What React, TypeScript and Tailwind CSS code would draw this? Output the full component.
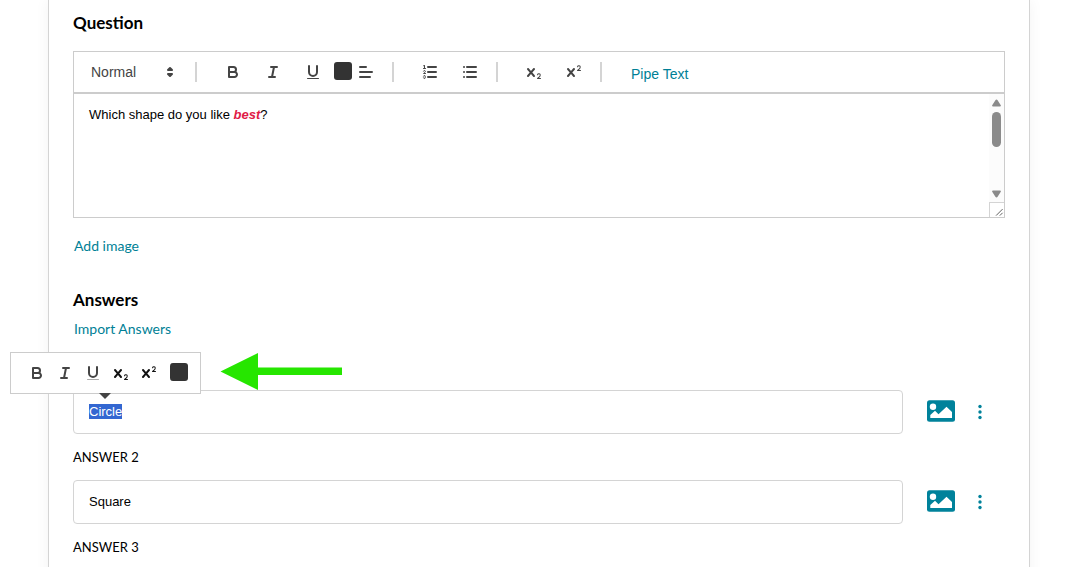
import { useEffect, useRef, type ReactNode } from "react";

function Icon({ children, className = "text-[#444]" }: { children: ReactNode; className?: string }) {
  return (
    <svg
      viewBox="0 0 18 18"
      aria-hidden="true"
      className={`size-[18px] shrink-0 ${className}`}
      fill="none"
      stroke="currentColor"
      strokeWidth="2"
      strokeLinecap="round"
      strokeLinejoin="round"
    >
      {children}
    </svg>
  );
}

const bold = (
  <>
    <path d="M5,4H9.5A2.5,2.5,0,0,1,12,6.5v0A2.5,2.5,0,0,1,9.5,9H5V4Z" />
    <path d="M5,9h5.5A2.5,2.5,0,0,1,13,11.5v0A2.5,2.5,0,0,1,10.5,14H5V9Z" />
  </>
);
const italic = <path d="M7,4H13M5,14H11M8,14L10,4" />;
const underline = (
  <>
    <path d="M5,3V9a4.012,4.012,0,0,0,4,4H9a4.012,4.012,0,0,0,4-4V3" />
    <rect x="3" y="15" width="12" height="1" rx="0.5" fill="currentColor" stroke="none" />
  </>
);
const underlineLight = (
  <>
    <path d="M5,3V9a4.012,4.012,0,0,0,4,4H9a4.012,4.012,0,0,0,4-4V3" />
    <rect x="3" y="15" width="12" height="1" rx="0.5" fill="#aaa" stroke="none" />
  </>
);
const align = <path d="M3,9H15M3,14H13M3,4H9" />;
const ordered = (
  <>
    <path d="M7,4H15M7,9H15M7,14H15" />
    <path strokeWidth="1" d="M2.5,5.5H4.5" />
    <path
      fill="currentColor"
      stroke="none"
      d="M3.5,6A0.5,0.5,0,0,1,3,5.5V3.085l-0.276.138A0.5,0.5,0,0,1,2.053,3c-0.124-.247-0.023-0.324.224-0.447l1-.5A0.5,0.5,0,0,1,4,2.5v3A0.5,0.5,0,0,1,3.5,6Z"
    />
    <path strokeWidth="1" d="M4.5,10.5h-2c0-.234,1.85-1.076,1.85-2.234A0.959,0.959,0,0,0,2.5,8.156" />
    <path
      strokeWidth="1"
      d="M2.5,14.846a0.959,0.959,0,0,0,1.85-.109A0.7,0.7,0,0,0,3.75,14a0.688,0.688,0,0,0,.6-0.736,0.959,0.959,0,0,0-1.85-.109"
    />
  </>
);
const bullet = <path d="M6,4H15M6,9H15M6,14H15M3,4h0.01M3,9h0.01M3,14h0.01" />;
const cross =
  "M9.65,5.241a1,1,0,0,0-1.409.108L6,7.964,3.759,5.349A1,1,0,0,0,2.192,6.59178Q2.21541,6.6213,2.241,6.649L4.684,9.5,2.241,12.35A1,1,0,0,0,3.71,13.70722q0.02557-.02768.049-0.05722L6,11.036,8.241,13.65a1,1,0,1,0,1.567-1.24277Q9.78459,12.3777,9.759,12.35L7.316,9.5,9.759,6.651A1,1,0,0,0,9.65,5.241Z";
const subscript = (
  <g fill="currentColor" stroke="none">
    <path d="M15.5,15H13.861a3.858,3.858,0,0,0,1.914-2.975,1.8,1.8,0,0,0-1.6-1.751A1.921,1.921,0,0,0,12.021,11.7a0.50013,0.50013,0,1,0,.957.291h0a0.914,0.914,0,0,1,1.053-.725,0.81,0.81,0,0,1,.744.762c0,1.076-1.16971,1.86982-1.93971,2.43082A1.45639,1.45639,0,0,0,12,15.5a0.5,0.5,0,0,0,.5.5h3A0.5,0.5,0,0,0,15.5,15Z" />
    <path d={cross} />
  </g>
);
const superscript = (
  <g fill="currentColor" stroke="none">
    <path d="M15.5,7H13.861a4.015,4.015,0,0,0,1.914-2.975,1.8,1.8,0,0,0-1.6-1.751A1.922,1.922,0,0,0,12.021,3.7a0.5,0.5,0,1,0,.957.291,0.917,0.917,0,0,1,1.053-.725,0.81,0.81,0,0,1,.744.762c0,1.077-1.164,1.925-1.934,2.486A1.423,1.423,0,0,0,12,7.5a0.5,0.5,0,0,0,.5.5h3A0.5,0.5,0,0,0,15.5,7Z" />
    <path d={cross} />
  </g>
);

function ToolButton({ label, children }: { label: string; children: ReactNode }) {
  return (
    <button type="button" aria-label={label} className="flex h-10 w-10 items-center justify-center">
      <Icon>{children}</Icon>
    </button>
  );
}

function BubbleButton({ label, dark, children }: { label: string; dark?: boolean; children: ReactNode }) {
  return (
    <button type="button" aria-label={label} className="flex h-10 w-7 items-center justify-center">
      <Icon className={dark ? "text-[#111]" : "text-[#444]"}>{children}</Icon>
    </button>
  );
}

function Divider() {
  return <span className="h-5 w-0.5 shrink-0 bg-[#d4d4d4]" />;
}

function EditorToolbar() {
  return (
    <div className="flex h-[43px] items-center border border-b-2 border-[#ccc] pl-[17px] font-['Liberation_Sans',sans-serif] text-sm">
      <div className="grid w-[88px] items-center">
        <select
          aria-label="Text style"
          className="col-start-1 row-start-1 h-6 w-full appearance-none bg-transparent text-[#444] outline-none"
        >
          <option>Normal</option>
        </select>
        <span className="pointer-events-none col-start-1 row-start-1 justify-self-end">
          <Icon>
            <path d="M7,11L9,13L11,11ZM7,7L9,5L11,7Z" fill="currentColor" />
          </Icon>
        </span>
      </div>
      <div className="ml-4 flex items-center">
        <Divider />
        <div className="ml-4 flex items-center">
          <ToolButton label="Bold">{bold}</ToolButton>
          <ToolButton label="Italic">{italic}</ToolButton>
          <ToolButton label="Underline">{underline}</ToolButton>
          <button type="button" aria-label="Text color" className="mb-0.5 ml-px size-[18px] rounded-[3px] bg-[#333]" />
          <button type="button" aria-label="Align" className="ml-[5px] flex h-10 items-center">
            <Icon>{align}</Icon>
          </button>
        </div>
      </div>
      <div className="ml-[17px] flex items-center">
        <Divider />
        <div className="ml-4 flex">
          <ToolButton label="Numbered list">{ordered}</ToolButton>
          <ToolButton label="Bulleted list">{bullet}</ToolButton>
        </div>
      </div>
      <div className="ml-1.5 flex items-center">
        <Divider />
        <div className="ml-4 flex">
          <ToolButton label="Subscript">{subscript}</ToolButton>
          <ToolButton label="Superscript">{superscript}</ToolButton>
        </div>
      </div>
      <div className="ml-1.5 flex items-center">
        <Divider />
        <button type="button" className="ml-[29px] pt-1 text-[#007f96]">
          Pipe Text
        </button>
      </div>
    </div>
  );
}

function QuestionEditor() {
  return (
    <div className="flex h-31 border border-t-0 border-[#ccc]">
      <div
        role="textbox"
        aria-label="Question text"
        aria-multiline="true"
        contentEditable
        suppressContentEditableWarning
        className="min-w-0 flex-1 px-[15px] py-3 font-['Liberation_Sans',sans-serif] text-[13px] leading-[18px] outline-none"
      >
        Which shape do you like <strong className="font-bold text-[#e01b46] italic">best</strong>?
      </div>
      <div className="flex w-[15px] flex-col" aria-hidden="true">
        <div className="flex flex-1 flex-col items-center bg-[#fcfcfc] pt-[5px] pb-1">
          <svg viewBox="0 0 9 8" className="h-2 w-[9px]" fill="#8b8b8b">
            <path d="M4.5 0.5Q5.2 0.5 5.6 1.2L8.8 6.2Q9.2 7.5 8 7.5H1Q-0.2 7.5 0.2 6.2L3.4 1.2Q3.8 0.5 4.5 0.5Z" />
          </svg>
          <span className="mt-[5px] h-[35px] w-[9px] rounded-full bg-[#8b8b8b]" />
          <svg viewBox="0 0 9 8" className="mt-auto h-2 w-[9px]" fill="#8b8b8b">
            <path d="M4.5 7.5Q5.2 7.5 5.6 6.8L8.8 1.8Q9.2 0.5 8 0.5H1Q-0.2 0.5 0.2 1.8L3.4 6.8Q3.8 7.5 4.5 7.5Z" />
          </svg>
        </div>
        <svg viewBox="0 0 15 15" className="size-[15px] border-t border-l border-[#d4d4d4]" fill="none" stroke="#555">
          <path d="M6.5 13.5L13.5 6.5M10.5 13.5L13.5 10.5" />
        </svg>
      </div>
    </div>
  );
}

function FormatBubble() {
  return (
    <div className="absolute -top-[5px] -left-[63px] z-10 flex items-start">
      <div className="relative flex h-[42px] w-[191px] items-center border border-[#ccc] bg-white pl-3">
        <BubbleButton label="Bold">{bold}</BubbleButton>
        <BubbleButton label="Italic">{italic}</BubbleButton>
        <BubbleButton label="Underline">{underlineLight}</BubbleButton>
        <BubbleButton label="Subscript" dark>{subscript}</BubbleButton>
        <BubbleButton label="Superscript" dark>{superscript}</BubbleButton>
        <button type="button" aria-label="Text color" className="mb-0.5 ml-[7px] size-[18px] rounded-[3px] bg-[#333]" />
        <svg viewBox="0 0 12 6" className="absolute top-full left-[88px] h-1.5 w-3" fill="#444" aria-hidden="true">
          <path d="M0 0H12L6 6Z" />
        </svg>
      </div>
      <svg viewBox="0 0 122 38" className="ml-[19px] h-[38px] w-[122px]" fill="#26e600" aria-hidden="true">
        <path d="M0.500 19.500L38 1V15.500H122V23H38V38Z" />
      </svg>
    </div>
  );
}

function Answer({ index, value, selected }: { index: number; value: string; selected?: boolean }) {
  const field = useRef<HTMLInputElement>(null);
  useEffect(() => {
    if (selected) {
      field.current?.focus();
      field.current?.select();
    }
  }, [selected]);
  const id = `answer-${index}`;
  return (
    <div className="relative mb-[13px]">
      {selected && <FormatBubble />}
      <label htmlFor={id} className="block text-[13px] leading-5 text-black">
        ANSWER {index}
      </label>
      <div className="mt-[13px] flex items-center">
        <input
          id={id}
          ref={field}
          type="text"
          defaultValue={value}
          className="h-11 min-w-0 flex-1 rounded border border-[#d4d4d4] bg-white px-[15px] pb-0.5 font-['Liberation_Sans',sans-serif] text-[13px] leading-[18px] text-black outline-none selection:bg-[#3367d1] selection:text-white"
        />
        <button type="button" aria-label="Add answer image" className="mb-0.5 ml-6">
          <svg viewBox="0 0 28 22" className="h-[22px] w-7" aria-hidden="true">
            <rect width="28" height="21.500" y="0.3" rx="2.5" fill="#00829b" />
            <circle cx="6" cy="6.700" r="3.2" fill="#fff" />
            <path d="M3.3 18V15L8 10.700L11.5 14.300L19.5 6.700L25 12V18Z" fill="#fff" />
          </svg>
        </button>
        <button type="button" aria-label="Answer options" className="mr-4 ml-4 flex w-[18px] justify-center">
          <svg viewBox="0 0 4 16" className="h-4 w-1" fill="#00829b" aria-hidden="true">
            <circle cx="2" cy="2.5" r="1.7" />
            <circle cx="2" cy="8" r="1.7" />
            <circle cx="2" cy="13.5" r="1.7" />
          </svg>
        </button>
      </div>
    </div>
  );
}

export default function App() {
  return (
    <div className="h-screen overflow-hidden bg-white font-[Lato,sans-serif]">
      <main className="mr-[38px] ml-12 min-h-screen border-x border-[#d4d4d4] bg-white px-6 pt-[13px] shadow-[0_0_14px_rgba(0,0,0,0.05)]">
        <section>
          <h2 className="mb-[18px] text-[17px] leading-5 font-bold text-black">Question</h2>
          <EditorToolbar />
          <QuestionEditor />
          <a href="#add-image" className="mt-[18px] block w-fit pl-px text-sm leading-5 text-[#007f96]">
            Add image
          </a>
        </section>
        <section className="mt-[34px]">
          <h2 className="text-[17px] leading-5 font-bold text-black">Answers</h2>
          <a href="#import" className="mt-[9px] mb-[18px] block w-fit pl-px text-sm leading-5 text-[#007f96]">
            Import Answers
          </a>
          <Answer index={1} value="Circle" selected />
          <Answer index={2} value="Square" />
          <Answer index={3} value="Triangle" />
        </section>
      </main>
    </div>
  );
}
